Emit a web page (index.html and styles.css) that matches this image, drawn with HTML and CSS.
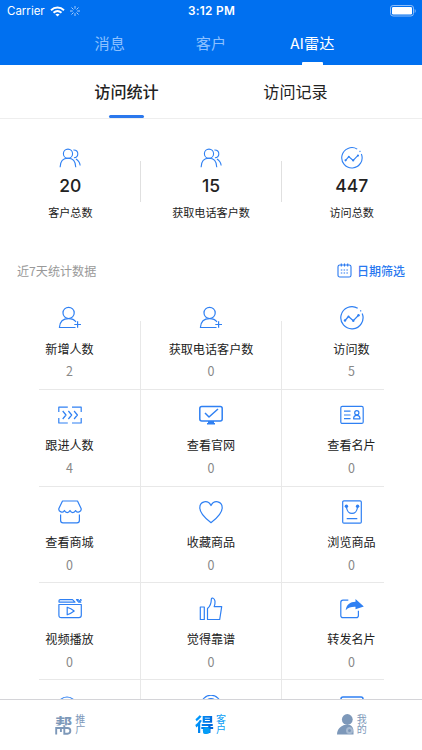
FILE: index.html
```html
<!DOCTYPE html>
<html lang="zh-CN">
<head>
<meta charset="utf-8">
<title>AI雷达</title>
<link rel="stylesheet" href="styles.css">
</head>
<body>
<svg class="defs" width="0" height="0">
  <symbol id="users" viewBox="0 0 24 24"><circle cx="9.8" cy="7.3" r="5"/><path d="M1.200 22c.2-6.800 3.800-9.700 8.600-9.700 4.800 0 8.300 3 8.500 9.700M15.700 3.300c3.200-.2 4.900 1.700 4.800 4.200 0 2.500-1.600 4-4.200 4.300M18.500 13c2.600 1.500 4.200 3.700 4.600 7.200"/></symbol>
  <symbol id="chart" viewBox="0 0 24 24"><path d="M17.700 2.300A11.100 11.100 0 1 0 22.200 7.600M20.300 4.300l.8 1"/><path d="M5 14.500l3.500-4 4.800 4.200 5-5.200"/><g class="solid"><circle cx="5" cy="14.500" r="1.200"/><circle cx="8.500" cy="10.500" r="1"/><circle cx="13.300" cy="14.700" r="1.200"/><circle cx="18.500" cy="9.300" r="1.200"/></g></symbol>
  <symbol id="adduser" viewBox="0 0 24 24"><circle cx="10.600" cy="6.900" r="5.600"/><path d="M17.500 21.500H1.400c.4-5.700 3.800-8.800 9.200-8.800 3.300 0 5.800 1.100 7.400 3.200M16.300 18.500H23M19.600 15.200v6.600"/></symbol>
  <symbol id="follow" viewBox="0 0 24 24"><path d="M.8 9V4.200h9M14 4.200h9.200V9M.8 15v5h9M14 20h9.200v-5M4.700 8l3.300 4-3.300 4M10.400 8l3.300 4-3.300 4M16.100 8l3.300 4-3.300 4"/></symbol>
  <symbol id="monitor" viewBox="0 0 24 24"><rect x=".8" y="3.500" width="22.400" height="14.500" rx="2"/><path d="M6 10l4 4 9-8M8 20.700h8"/><path class="solid" d="M9 18h6v2.500H9z"/></symbol>
  <symbol id="card" viewBox="0 0 24 24"><rect x=".8" y="3.400" width="22.400" height="17" rx="1.500"/><path d="M4 8.200h6.500M4 12h6.500M4 15.700h6.500"/><circle cx="16.800" cy="9.700" r="2.100"/><path d="M13.600 15.800c0-2.500 1.300-3.500 3.200-3.500s3.200 1 3.200 3.500z"/></symbol>
  <symbol id="shop" viewBox="0 0 24 24"><path d="M4.500 1h15l3.600 7.500c.8 3.400-4.400 5.100-5.500 2-1.400 2.700-4.300 2.700-5.600 0-1.300 2.700-4.200 2.700-5.600 0-1.100 3.100-6.300 1.400-5.500-2zM2.600 14.500v5.700c0 1.700.8 2.600 2.400 2.600h14c1.600 0 2.400-.9 2.400-2.600v-5.700"/></symbol>
  <symbol id="heart" viewBox="0 0 24 24"><path d="M12 22.700C8.500 20 0.800 14.200.8 7.800.8 1.300 8.700-.7 12 5.500 15.300-.7 23.200 1.300 23.200 7.800 23.200 14.200 15.500 20 12 22.700z"/></symbol>
  <symbol id="bag" viewBox="0 0 24 24"><rect x="2.700" y=".8" width="18.600" height="22.400" rx="1.200"/><path d="M6.500 6.700c.5 9 10.500 9 11 0M6.700 18.700h10.600"/><g class="solid"><circle cx="6.400" cy="6.300" r="1.700"/><circle cx="17.600" cy="6.300" r="1.700"/></g></symbol>
  <symbol id="video" viewBox="0 0 24 24"><path d="M1 5.100V3.800c0-.8.400-1.200 1.200-1.200h12.300l2.500 2.500zM18.500 2.600h1.700l2.600 2.500h-2.200zM22 2.600h1v1.500M.9 7.500h22.400v10.800c0 1.600-.8 2.400-2.400 2.400H3.300C1.700 20.700.9 19.900.9 18.300zM9.200 10.200v7.600c2.300-.8 4.800-2.100 7-3.800-2.200-1.800-4.400-3-7-3.800z"/></symbol>
  <symbol id="thumb" viewBox="0 0 24 24"><path d="M1.300 10h4v12.500h-4zM8.500 11.500c2.500-2.100 3.800-5.300 3.800-9 0-1.100.6-1.600 1.700-1.300 2.300.7 2.600 4.200 1.200 8.400h7.500l-2 12.900H8.500z"/></symbol>
  <symbol id="share" viewBox="0 0 24 24"><path d="M8.300 3.200H3c-1.400 0-2.200.8-2.200 2.200v13c0 1.400.8 2.200 2.200 2.200h13.200c1.400 0 2.200-.8 2.200-2.200v-4.600"/><path class="solid" d="M15.500 2l8.300 7.500-8.300 2.800V9.800c-4.300-.1-7.100.6-9.800 3.400.8-5.600 4.400-8.400 9.800-8.500z"/></symbol>
  <symbol id="face" viewBox="0 0 24 24"><circle cx="9" cy="11.500" r="9.500"/><path d="M4 6.700l2-1 1.800 1M11 6.700l2-1 1.600 1"/></symbol>
  <symbol id="signal" viewBox="0 0 24 24"><circle cx="12" cy="10" r="9.800"/><circle cx="12" cy="10" r="6.400"/></symbol>
  <symbol id="panel" viewBox="0 0 24 24"><path d="M2.500 6.500H1V4c0-1.400.6-2 2-2h18c1.400 0 2 .6 2 2v2.500h-1.500"/></symbol>
</svg>
<div class="app">
  <header class="header">
    <div class="status">
      <div class="carrier"><span>Carrier</span>
        <svg width="15" height="11" viewBox="0 0 15 11"><g fill="none" stroke="#fff" stroke-width="1.900"><path d="M1 4.200c3.800-3.600 9.200-3.600 13 0M3.500 6.800c2.400-2.200 5.600-2.200 8 0"/></g><path fill="#fff" d="M7.500 10.500L5.400 8.400c1.200-1 3-1 4.200 0z"/></svg>
        <svg class="spin" width="10" height="10" viewBox="0 0 10 10"><path d="M5 0v2.800M5 7.200V10M0 5h2.800M7.200 5H10M1.500 1.500l2 2M6.500 6.500l2 2M8.500 1.500l-2 2M3.500 6.500l-2 2"/></svg>
      </div>
      <div class="time">3:12 PM</div>
      <svg class="battery" width="26" height="12" viewBox="0 0 26 12"><rect x=".5" y=".5" width="23" height="10.500" rx="2.600" fill="none" stroke="#8dbdf9"/><rect x="2" y="2" width="20" height="7.500" rx="1.200" fill="#fff"/><path d="M24.700 4v4q1-.6 1-2t-1-2" fill="#8dbdf9"/></svg>
    </div>
    <nav class="top-tabs"><span>消息</span><span>客户</span><span class="active">AI雷达</span></nav>
  </header>
  <nav class="sub-tabs"><span class="active">访问统计</span><span>访问记录</span></nav>
  <main class="content">
    <section class="totals">
      <div class="total"><svg class="icon"><use href="#users"/></svg><b>20</b><span>客户总数</span></div>
      <div class="total"><svg class="icon"><use href="#users"/></svg><b>15</b><span>获取电话客户数</span></div>
      <div class="total"><svg class="icon"><use href="#chart"/></svg><b>447</b><span>访问总数</span></div>
    </section>
    <div class="filter"><span>近7天统计数据</span>
      <span class="date"><svg width="15" height="15" viewBox="0 0 15 15"><rect x="1" y="2" width="13" height="12" rx="1.800"/><path d="M4.300.4v3.200M7.500.4v3.200M10.700.4v3.200"/><path class="dots" d="M3.800 7h7.800M3.800 10h7.800"/></svg>日期筛选</span>
    </div>
    <section class="grid">
      <div class="cell"><svg class="icon"><use href="#adduser"/></svg><span>新增人数</span><em>2</em></div>
      <div class="cell"><svg class="icon"><use href="#adduser"/></svg><span>获取电话客户数</span><em>0</em></div>
      <div class="cell"><svg class="icon"><use href="#chart"/></svg><span>访问数</span><em>5</em></div>
      <div class="cell"><svg class="icon"><use href="#follow"/></svg><span>跟进人数</span><em>4</em></div>
      <div class="cell"><svg class="icon bold"><use href="#monitor"/></svg><span>查看官网</span><em>0</em></div>
      <div class="cell"><svg class="icon"><use href="#card"/></svg><span>查看名片</span><em>0</em></div>
      <div class="cell"><svg class="icon"><use href="#shop"/></svg><span>查看商城</span><em>0</em></div>
      <div class="cell"><svg class="icon"><use href="#heart"/></svg><span>收藏商品</span><em>0</em></div>
      <div class="cell"><svg class="icon"><use href="#bag"/></svg><span>浏览商品</span><em>0</em></div>
      <div class="cell"><svg class="icon"><use href="#video"/></svg><span>视频播放</span><em>0</em></div>
      <div class="cell"><svg class="icon"><use href="#thumb"/></svg><span>觉得靠谱</span><em>0</em></div>
      <div class="cell"><svg class="icon"><use href="#share"/></svg><span>转发名片</span><em>0</em></div>
      <div class="cell last"><svg class="icon"><use href="#face"/></svg></div>
      <div class="cell last"><svg class="icon"><use href="#signal"/></svg></div>
      <div class="cell last"><svg class="icon bold"><use href="#panel"/></svg></div>
    </section>
  </main>
  <footer class="tabbar">
    <div class="tab"><div class="mark"><span class="bang">帮</span><svg class="nb" width="17" height="10" viewBox="0 0 17 10"><path d="M1.200 9.500V3H5.900V7M9.300.5v8.200h3.200c3.800 0 3.800-5.700 0-5.700H5"/></svg></div><div class="side">推广</div></div>
    <div class="tab on"><div class="mark"><span class="de">得</span><i class="drop"></i></div><div class="side">客户</div></div>
    <div class="tab"><svg class="me" width="17" height="21" viewBox="0 0 17 21"><circle cx="10.300" cy="5.500" r="5.400"/><path d="M0 20.500c0-4.900 3-7.700 7-9.500h6c2.300 1.200 3.500 3.400 3.500 6.500v3z"/><circle class="gear" cx="12.500" cy="16.500" r="3.500"/><circle cx="12.500" cy="16.500" r="1.500"/></svg><div class="side">我的</div></div>
  </footer>
</div>
</body>
</html>
```
FILE: styles.css
```css
* { box-sizing: border-box; }
body { margin: 0; background: #fff; color: #222; font-family: "Noto Sans CJK SC", sans-serif; }
.defs { display: block; width: 0; height: 0; }
.app { width: 422px; height: 750px; display: flex; flex-direction: column; overflow: hidden; }
.header { height: 65.4px; flex: none; background: #0070f0; color: #fff; }
.status { height: 22px; padding: 0 6px 0 7px; display: grid; grid-template-columns: 1fr auto 1fr; align-items: center; font: 11.5px/22px Inter, sans-serif; }
.carrier { display: flex; align-items: center; gap: 5px; }
.carrier .spin { stroke: #a8cdfb; stroke-width: 1; }
.time { font-weight: 600; font-size: 11.8px; letter-spacing: .3px; }
.battery { justify-self: end; }
.top-tabs { height: 43.400px; width: 304px; margin-left: 59px; display: grid; grid-template-columns: repeat(3, 1fr); font-size: 15.200px; line-height: 40px; text-align: center; color: #8cc0ff; }
.top-tabs span { position: relative; }
.top-tabs .active { color: #fff; }
.top-tabs .active::after { content: ""; position: absolute; width: 21px; height: 3px; left: 50%; margin-left: -10px; bottom: 0; background: #fff; border-radius: 1px 1px 0 0; }
.sub-tabs { height: 53.6px; flex: none; padding: 0 42px; display: grid; grid-template-columns: 1fr 1fr; border-bottom: 1px solid #eee; text-align: center; font-size: 16.100px; line-height: 53px; }
.sub-tabs span { position: relative; }
.sub-tabs .active { font-weight: 500; }
.sub-tabs .active::after { content: ""; position: absolute; left: 50%; margin-left: -17.500px; bottom: 0; width: 35px; height: 3px; border-radius: 1.500px; background: #2b78ed; }
.content { height: 580px; flex: none; overflow: hidden; }
.totals { height: 126px; display: grid; grid-template-columns: repeat(3, 1fr); padding-top: 27px; }
.total { position: relative; display: flex; flex-direction: column; align-items: center; }
.total + .total::before { content: ""; position: absolute; left: -.4px; top: 15px; width: 1px; height: 41px; background: #e0e0e0; }
.icon { display: block; width: 24px; height: 24px; fill: none; stroke: #2f80f3; stroke-width: 1.200; stroke-linejoin: round; }
.icon.bold { stroke-width: 1.500; }
.solid { fill: #2f80f3; stroke: none; }
.total b { font: 500 17.500px/24px Inter, sans-serif; margin-top: 5px; }
.total .icon { width: 22px; height: 22px; margin-top: 1px; }
.total span { font-size: 11.100px; line-height: 16px; margin-top: 6px; }
.filter { height: 48px; padding: 2px 17px 0 17px; display: flex; justify-content: space-between; align-items: flex-start; font-size: 12.100px; line-height: 48px; color: #999; }
.date { display: flex; align-items: center; gap: 5px; color: #2878f0; font-weight: 500; font-size: 12px; }
.date svg { fill: none; stroke: #2878f0; stroke-width: 1.100; }
.date .dots { stroke-dasharray: 1.500 1.300; }
.grid { display: grid; grid-template-columns: 102px 141px 102px; justify-content: center; grid-auto-rows: 96.800px; }
.cell { position: relative; display: flex; flex-direction: column; align-items: center; padding-top: 13.300px; border-bottom: 1px solid #e8e8e8; }
.cell::after { content: ""; position: absolute; right: 0; top: 0; bottom: -1px; width: 1px; background: #e8e8e8; }
.cell:nth-child(-n+3)::after { top: 28px; }
.cell:nth-child(3n)::after { display: none; }
.cell:nth-child(3n) { padding-left: 38px; }
.cell:nth-child(3n+1) { padding-right: 40px; }
.last { padding-top: 14.500px; }
.cell span { font-size: 12.100px; line-height: 18px; margin-top: 9.300px; white-space: nowrap; }
.cell em { font-size: 12.500px; font-style: normal; line-height: 18px; margin-top: 4.800px; color: #888; }
.tabbar { height: 51px; flex: none; border-top: 1px solid #d4d4d8; background: #fff; display: grid; grid-template-columns: repeat(3, 1fr); color: #7d98b9; }
.tab { display: flex; justify-content: center; padding-top: 14px; gap: 3px; }
.mark { position: relative; width: 17px; height: 21px; }
.mark span { display: block; width: 20px; font-size: 17px; line-height: 20px; font-weight: 700; }
.bang { clip-path: inset(0 0 8.500px 0); }
.nb { position: absolute; left: 0; bottom: 0; fill: none; stroke: #7d98b9; stroke-width: 1.900; }
.side { width: 10px; font-size: 10px; line-height: 9.600px; word-break: break-all; }
.mark .de { font-size: 19px; margin-left: -1px; line-height: 19px; background: linear-gradient(110deg, #009cff 10%, #0066dc 75%); background-clip: text; color: transparent; }
.drop { position: absolute; right: 3px; bottom: 1px; width: 7px; height: 7px; border-radius: 4px 4px 4px 2px; background: #049df7; }
.on .side { color: #099df5; }
.me { fill: #7d98b9; }
.me .gear { fill: #a7bad1; }
```
